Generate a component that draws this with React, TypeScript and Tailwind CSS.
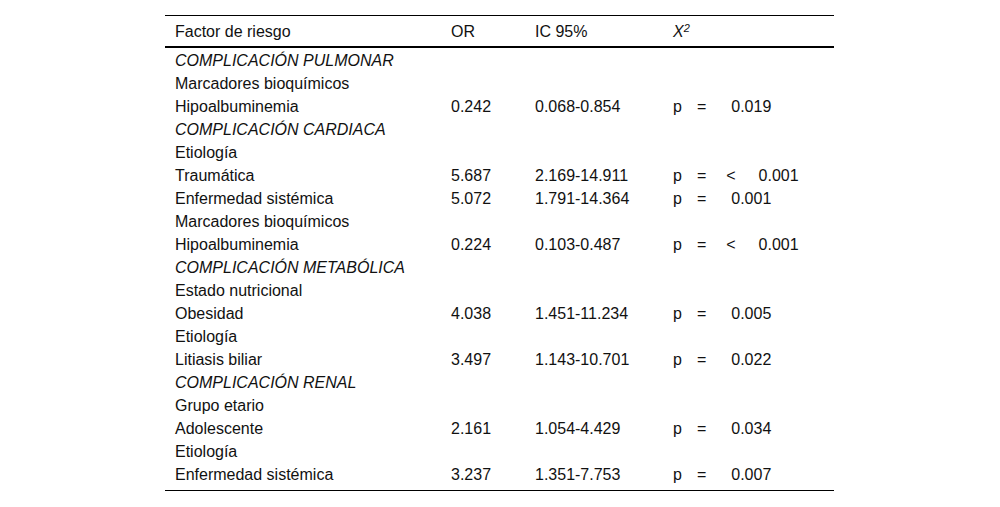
const rows: { label: string; italic?: boolean; or?: string; ic?: string; lt?: boolean; p?: string }[] = [
  { label: 'COMPLICACIÓN PULMONAR', italic: true },
  { label: 'Marcadores bioquímicos' },
  { label: 'Hipoalbuminemia', or: '0.242', ic: '0.068-0.854', p: '0.019' },
  { label: 'COMPLICACIÓN CARDIACA', italic: true },
  { label: 'Etiología' },
  { label: 'Traumática', or: '5.687', ic: '2.169-14.911', lt: true, p: '0.001' },
  { label: 'Enfermedad sistémica', or: '5.072', ic: '1.791-14.364', p: '0.001' },
  { label: 'Marcadores bioquímicos' },
  { label: 'Hipoalbuminemia', or: '0.224', ic: '0.103-0.487', lt: true, p: '0.001' },
  { label: 'COMPLICACIÓN METABÓLICA', italic: true },
  { label: 'Estado nutricional' },
  { label: 'Obesidad', or: '4.038', ic: '1.451-11.234', p: '0.005' },
  { label: 'Etiología' },
  { label: 'Litiasis biliar', or: '3.497', ic: '1.143-10.701', p: '0.022' },
  { label: 'COMPLICACIÓN RENAL', italic: true },
  { label: 'Grupo etario' },
  { label: 'Adolescente', or: '2.161', ic: '1.054-4.429', p: '0.034' },
  { label: 'Etiología' },
  { label: 'Enfermedad sistémica', or: '3.237', ic: '1.351-7.753', p: '0.007' },
]

export default function App() {
  return (
    <div className="w-[1000px] h-[507px] bg-white pt-[15px] text-[16px] leading-[20px] text-[#111]" style={{ fontFamily: '"Liberation Sans", Arial, sans-serif' }}>
      <div className="ml-[165px] w-[669px] border-t border-black border-b">
        <div className="grid grid-cols-[276px_84px_138px_1fr] h-[32px] pt-[2px] items-center border-b-2 border-black">
          <div className="pl-[10px]">Factor de riesgo</div>
          <div className="pl-[10px]">OR</div>
          <div className="pl-[10px]">IC 95%</div>
          <div className="pl-[10px]">
            <span className="italic">X</span>
            <sup className="text-[11px] italic">2</sup>
          </div>
        </div>
        <div className="pt-[1px] pb-[4px]">
          {rows.map((r, i) => (
            <div key={i} className="grid grid-cols-[276px_84px_138px_1fr] h-[23px] items-center">
              <div className={r.italic ? 'pl-[10px] italic' : 'pl-[10px]'}>{r.label}</div>
              <div className="pl-[10px]">{r.or}</div>
              <div className="pl-[10px]">{r.ic}</div>
              <div className="pl-[10px] flex">
                {r.p && (
                  <>
                    <span>p</span>
                    <span className="ml-[15px]">=</span>
                    {r.lt ? (
                      <>
                        <span className="ml-[20px]">&lt;</span>
                        <span className="ml-[23px]">{r.p}</span>
                      </>
                    ) : (
                      <span className="ml-[25px]">{r.p}</span>
                    )}
                  </>
                )}
              </div>
            </div>
          ))}
        </div>
      </div>
    </div>
  )
}
